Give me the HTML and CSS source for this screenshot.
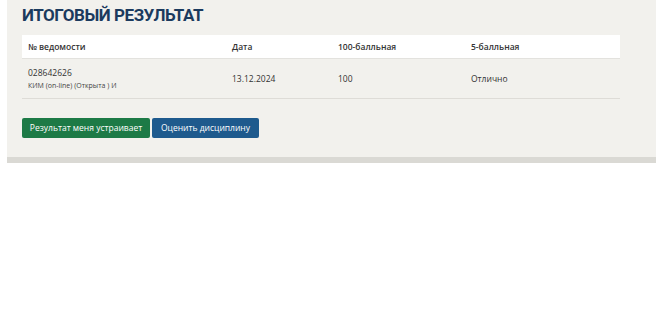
FILE: index.html
```html
<!DOCTYPE html>
<html>
  <head>
    <meta charset="utf-8">
    <link rel="stylesheet" href="styles.css">
  </head>
  <body>
  <main class='panel'>
    <h1 class='title'>ИТОГОВЫЙ РЕЗУЛЬТАТ</h1>
    <table class='results'>
      <thead>
        <tr>
          <th class='col-num'>№ ведомости</th>
          <th class='col-date'>Дата</th>
          <th class='col-100'>100-балльная</th>
          <th>5-балльная</th>
        </tr>
      </thead>
      <tbody>
        <tr>
          <td>
            <div class='sheet'>028642626</div>
            <div class='sheet-type'>КИМ (on-line) (Открыта ) И</div>
          </td>
          <td>13.12.2024</td>
          <td>100</td>
          <td>Отлично</td>
        </tr>
      </tbody>
    </table>
    <section class='actions'>
      <button class='btn btn-accept' type=button>Результат меня устраивает</button>
      <button class='btn btn-rate' type=button>Оценить дисциплину</button>
    </section>
  </main>
  </body>
</html>
```

FILE: styles.css
```css
* {
  box-sizing: border-box;
}
body {
  margin: 0;
  font-family: "Open Sans", "Noto Sans", sans-serif;
  background-color: #fff;
  color: #333;
}
.panel {
  width: 649px;
  margin-left: 7px;
  padding: 4px 36px 19px 15px;
  background-color: #f2f1ed;
  border-bottom: 6px solid #dad9d4;
}
.title {
  margin: 0 0 8px;
  font-family: Roboto, "Open Sans", sans-serif;
  font-size: 17px;
  font-weight: 700;
  letter-spacing: -0.45px;
  color: #1b3a5e;
  line-height: 23px;
}
.results {
  width: 100%;
  border-collapse: collapse;
  font-size: 8.5px;
}
.results th {
  background-color: #fff;
  text-align: left;
  font-weight: 600;
  height: 23px;
  padding: 0 6px;
  border-bottom: 1px solid #e3e2de;
}
.results td {
  height: 40px;
  padding: 0 6px;
  border-bottom: 1px solid #dedcd7;
}
.col-num {
  width: 204px;
}
.col-date {
  width: 106px;
}
.col-100 {
  width: 133px;
}
.sheet {
  margin-bottom: 3px;
}
.sheet-type {
  font-size: 7px;
  color: #444;
}
.actions {
  margin-top: 19px;
  display: flex;
  gap: 2px;
}
.btn {
  height: 20px;
  padding: 0 4px;
  border: none;
  border-radius: 2px;
  font-family: inherit;
  font-size: 8.5px;
  white-space: nowrap;
  color: #fff;
  cursor: pointer;
}
.btn-accept {
  width: 128px;
  background-color: #1d7a46;
}
.btn-rate {
  width: 107px;
  background-color: #1e5a8d;
}
```
